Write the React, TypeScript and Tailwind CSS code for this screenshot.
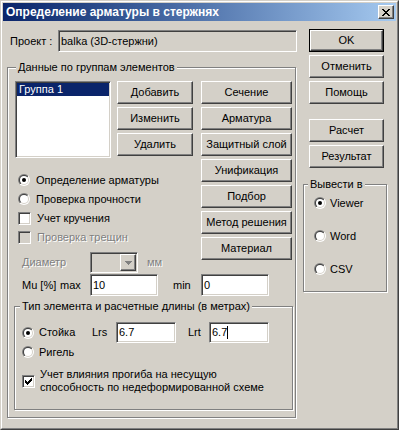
import React, { useId } from "react";

const raised =
  "border border-t-white border-l-white border-r-[#404040] border-b-[#404040] shadow-[inset_-1px_-1px_0_#808080] bg-[#D4D0C8]";
const sunken =
  "border border-t-[#808080] border-l-[#808080] border-r-white border-b-white shadow-[inset_1px_1px_0_#404040,inset_-1px_-1px_0_#D4D0C8]";
const etched = "border border-[#808080] shadow-[inset_1px_1px_0_#fff,1px_1px_0_#fff]";
const disabledText = "text-[#808080] [text-shadow:1px_1px_0_#fff]";

const Button = ({ label, className = "" }: { label: string; className?: string }) => (
  <div className={`${raised} h-[23px] flex items-center justify-center ${className}`}>{label}</div>
);

const Radio = ({ checked = false }: { checked?: boolean }) => {
  const id = useId().replace(/[^a-zA-Z0-9]/g, "");
  return (
    <svg width="12" height="12" viewBox="0 0 12 12" className="shrink-0">
      <defs>
        <linearGradient id={`o${id}`} x1="0" y1="0" x2="1" y2="1">
          <stop offset="0.5" stopColor="#808080" />
          <stop offset="0.5" stopColor="#ffffff" />
        </linearGradient>
        <linearGradient id={`i${id}`} x1="0" y1="0" x2="1" y2="1">
          <stop offset="0.5" stopColor="#404040" />
          <stop offset="0.5" stopColor="#D4D0C8" />
        </linearGradient>
      </defs>
      <circle cx="6" cy="6" r="6" fill={`url(#o${id})`} />
      <circle cx="6" cy="6" r="5" fill={`url(#i${id})`} />
      <circle cx="6" cy="6" r="4" fill="#fff" />
      {checked && <circle cx="6" cy="6" r="2" fill="#000" />}
    </svg>
  );
};

const Check = ({ checked = false, disabled = false }: { checked?: boolean; disabled?: boolean }) => (
  <div
    className={`${sunken} w-[13px] h-[13px] shrink-0 flex items-center justify-center ${
      disabled ? "bg-[#D4D0C8]" : "bg-white"
    }`}
  >
    {checked && (
      <svg width="7" height="7" viewBox="0 0 7 7" shapeRendering="crispEdges">
        <path d="M6 0h1v1H6zM5 1h2v1H5zM0 2h1v1H0zM4 2h3v1H4zM0 3h2v1H0zM3 3h3v1H3zM0 4h5v1H0zM1 5h3v1H1zM2 6h1v1H2z" />
      </svg>
    )}
  </div>
);

const Edit = ({ value, className = "", caret = false }: { value: string; className?: string; caret?: boolean }) => (
  <div className={`${sunken} bg-white flex items-center pl-[2px] ${className}`}>
    <span>{value}</span>
    {caret && <span className="w-px h-[13px] bg-black" />}
  </div>
);

const GroupBox = ({
  title,
  left,
  className = "",
  children,
}: {
  title: string;
  left: string;
  className?: string;
  children: React.ReactNode;
}) => (
  <div className={`relative ${etched} ${className}`}>
    <span className={`absolute top-[-7px] ${left} px-[2px] bg-[#D4D0C8] whitespace-nowrap`}>{title}</span>
    {children}
  </div>
);

export default function App() {
  return (
    <div className="w-[399px] h-[430px] border border-t-[#D4D0C8] border-l-[#D4D0C8] border-r-[#404040] border-b-[#404040] bg-[#D4D0C8] text-[11px] leading-[13px] text-black font-['Liberation_Sans',Arial,sans-serif]">
      <div className="h-full border border-t-white border-l-white border-r-[#808080] border-b-[#808080] p-px flex flex-col">
        <div className="h-[18px] shrink-0 flex items-center justify-between pl-[3px] pr-[2px] bg-linear-to-r from-[#0A246A] to-[#A6CAF0]">
          <span className="text-white font-bold text-[12px]">Определение арматуры в стержнях</span>
          <div className={`${raised} w-[16px] h-[14px] flex items-center justify-center`}>
            <svg width="8" height="7" viewBox="0 0 8 7" shapeRendering="crispEdges">
              <path d="M0 0h2v1H0zM6 0h2v1H6zM1 1h2v1H1zM5 1h2v1H5zM2 2h4v1H2zM3 3h2v1H3zM2 4h4v1H2zM1 5h2v1H1zM5 5h2v1H5zM0 6h2v1H0zM6 6h2v1H6z" />
            </svg>
          </div>
        </div>

        <div className="flex pl-[4px]">
          {/* left column */}
          <div className="w-[290px] flex flex-col">
            <div className="mt-[9px] h-[22px] flex items-center">
              <span className="w-[51px] pl-[3px]">Проект :</span>
              <div className={`${sunken} w-[239px] h-[22px] flex items-center pl-[2px]`}>balka (3D-стержни)</div>
            </div>

            <GroupBox title="Данные по группам элементов" left="left-[8px]" className="mt-[15px] w-[289px] h-[351px] pl-[6px] pt-[13px]">
              <div className="flex">
                <div className="w-[179px] flex flex-col">
                  <div className="flex">
                    <div className={`${sunken} ml-px w-[96px] h-[77px] bg-white p-px`}>
                      <div className="h-[13px] bg-[#0A246A] text-white pl-[2px]">Группа 1</div>
                    </div>
                    <div className="ml-[6px] w-[76px] flex flex-col gap-[3px]">
                      <Button label="Добавить" />
                      <Button label="Изменить" />
                      <Button label="Удалить" />
                    </div>
                  </div>

                  <div className="mt-[14px] ml-[4px] flex flex-col gap-[3px]">
                    <div className="h-[16px] flex items-center gap-[6px]">
                      <Radio checked />
                      <span>Определение арматуры</span>
                    </div>
                    <div className="h-[16px] flex items-center gap-[6px]">
                      <Radio />
                      <span>Проверка прочности</span>
                    </div>
                    <div className="h-[16px] flex items-center gap-[6px]">
                      <Check />
                      <span>Учет кручения</span>
                    </div>
                    <div className="h-[16px] flex items-center gap-[6px]">
                      <Check disabled />
                      <span className={disabledText}>Проверка трещин</span>
                    </div>
                  </div>

                  <div className="mt-[7px] h-[21px] flex items-center">
                    <span className={`ml-[8px] w-[68px] ${disabledText}`}>Диаметр</span>
                    <div className={`${sunken} w-[48px] h-[21px] bg-[#D4D0C8] flex justify-end p-px`}>
                      <div className={`${raised} w-[16px] h-full flex items-center justify-center`}>
                        <svg width="7" height="4" viewBox="0 0 7 4" shapeRendering="crispEdges">
                          <path d="M0 0h7v1H0zM1 1h5v1H1zM2 2h3v1H2zM3 3h1v1H3z" fill="#808080" />
                        </svg>
                      </div>
                    </div>
                    <span className={`ml-[9px] ${disabledText}`}>мм</span>
                  </div>
                </div>

                <div className="ml-[8px] w-[91px] flex flex-col gap-[3px]">
                  <Button label="Сечение" />
                  <Button label="Арматура" />
                  <Button label="Защитный слой" />
                  <Button label="Унификация" />
                  <Button label="Подбор" />
                  <Button label="Метод решения" />
                  <Button label="Материал" />
                </div>
              </div>

              <div className="mt-px h-[22px] flex items-center">
                <span className="ml-[8px] w-[38px]">Mu [%]</span>
                <span className="w-[30px]">max</span>
                <Edit value="10" className="w-[68px] h-[22px]" />
                <span className="w-[43px] pl-[15px]">min</span>
                <Edit value="0" className="w-[68px] h-[22px]" />
              </div>

              <GroupBox
                title="Тип элемента и расчетные длины (в метрах)"
                left="left-[5px]"
                className="mt-[10px] w-[279px] h-[104px] pt-[15px]"
              >
                <div className="h-[21px] flex items-center">
                  <div className="ml-[7px] w-[70px] flex items-center gap-[5px]">
                    <Radio checked />
                    <span>Стойка</span>
                  </div>
                  <span className="w-[24px]">Lrs</span>
                  <Edit value="6.7" className="w-[60px] h-[21px]" />
                  <span className="w-[33px] pl-[12px]">Lrt</span>
                  <Edit value="6.7" caret className="w-[60px] h-[21px]" />
                </div>
                <div className="mt-px ml-[7px] h-[16px] flex items-center gap-[5px]">
                  <Radio />
                  <span>Ригель</span>
                </div>
                <div className="mt-[8px] ml-[7px] flex items-center gap-[5px]">
                  <Check checked />
                  <span>
                    Учет влияния прогиба на несущую
                    <br />
                    способность по недеформированной схеме
                  </span>
                </div>
              </GroupBox>
            </GroupBox>
          </div>

          {/* right column */}
          <div className="ml-[6px] w-[84px] flex flex-col">
            <div className="mt-[8px] ml-[6px] w-[75px] h-[23px] border border-black">
              <div className={`${raised} h-full flex items-center justify-center`}>OK</div>
            </div>
            <Button label="Отменить" className="mt-[3px] ml-[6px] w-[75px]" />
            <Button label="Помощь" className="mt-[3px] ml-[6px] w-[75px]" />
            <Button label="Расчет" className="mt-[15px] ml-[6px] w-[75px]" />
            <Button label="Результат" className="mt-[3px] ml-[6px] w-[75px]" />

            <GroupBox title="Вывести в" left="left-[4px]" className="mt-[16px] w-[84px] h-[108px] pt-[10px] pl-[10px]">
              <div className="flex flex-col gap-[17px]">
                <div className="h-[16px] flex items-center gap-[4px]">
                  <Radio checked />
                  <span>Viewer</span>
                </div>
                <div className="h-[16px] flex items-center gap-[4px]">
                  <Radio />
                  <span>Word</span>
                </div>
                <div className="h-[16px] flex items-center gap-[4px]">
                  <Radio />
                  <span>CSV</span>
                </div>
              </div>
            </GroupBox>
          </div>
        </div>
      </div>
    </div>
  );
}
